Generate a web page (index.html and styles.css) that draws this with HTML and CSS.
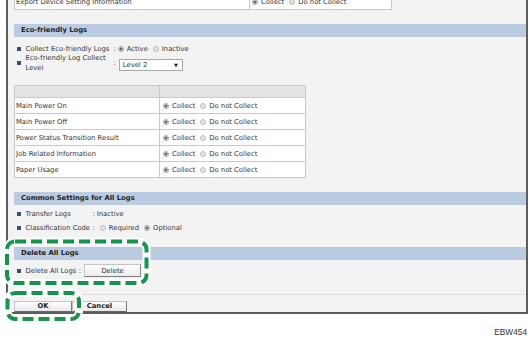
FILE: index.html
```html
<!DOCTYPE html>
<html>
<head>
<meta charset="utf-8">
<link rel="stylesheet" href="styles.css">
</head>
<body>
<div class="frame">
  <div class="ttbl">
    <div class="cell c1">Export Device Setting Information</div>
    <div class="cell c2"><span class="opts"><span class="rd on"></span><span class="ol">Collect</span><span class="rd"></span><span class="ol">Do not Collect</span></span></div>
  </div>

  <section class="sec eco">
    <div class="hdr">Eco-friendly Logs</div>
    <div class="rows">
      <div class="row r1"><span class="bul"></span><span class="lbl">Collect Eco-friendly Logs</span><span class="colon">:</span><span class="opts"><span class="rd on"></span><span class="ol">Active</span><span class="rd"></span><span class="ol">Inactive</span></span></div>
      <div class="row r2"><span class="bul"></span><span class="lbl">Eco-friendly Log Collect Level</span><span class="colon">:</span><span class="sel"><span>Level 2</span><span class="arr">&#9660;</span></span></div>
    </div>
    <div class="ltbl">
      <div class="cell hd"></div><div class="cell hd"></div>
      <div class="cell c1">Main Power On</div><div class="cell c2"><span class="opts"><span class="rd on"></span><span class="ol">Collect</span><span class="rd"></span><span class="ol">Do not Collect</span></span></div>
      <div class="cell c1">Main Power Off</div><div class="cell c2"><span class="opts"><span class="rd on"></span><span class="ol">Collect</span><span class="rd"></span><span class="ol">Do not Collect</span></span></div>
      <div class="cell c1">Power Status Transition Result</div><div class="cell c2"><span class="opts"><span class="rd on"></span><span class="ol">Collect</span><span class="rd"></span><span class="ol">Do not Collect</span></span></div>
      <div class="cell c1">Job Related Information</div><div class="cell c2"><span class="opts"><span class="rd on"></span><span class="ol">Collect</span><span class="rd"></span><span class="ol">Do not Collect</span></span></div>
      <div class="cell c1">Paper Usage</div><div class="cell c2"><span class="opts"><span class="rd on"></span><span class="ol">Collect</span><span class="rd"></span><span class="ol">Do not Collect</span></span></div>
    </div>
  </section>

  <section class="sec common">
    <div class="hdr">Common Settings for All Logs</div>
    <div class="rows">
      <div class="row"><span class="bul"></span><span class="lbl">Transfer Logs</span><span class="colon">:</span><span class="txt">Inactive</span></div>
      <div class="row"><span class="bul"></span><span class="lbl">Classification Code</span><span class="colon">:</span><span class="opts pad"><span class="rd"></span><span class="ol">Required</span><span class="rd on"></span><span class="ol">Optional</span></span></div>
    </div>
  </section>

  <section class="sec del">
    <div class="hdr">Delete All Logs</div>
    <div class="rows">
      <div class="row"><span class="bul"></span><span class="lbl">Delete All Logs</span><span class="colon">:</span><button class="dbtn">Delete</button></div>
    </div>
  </section>

  <div class="btnbar">
    <button class="btn ok">OK</button><button class="btn cancel">Cancel</button>
  </div>
</div>
<div class="code">EBW454</div>

<svg class="marks" width="530" height="338" viewBox="0 0 530 338">
  <rect x="7" y="241.5" width="139.5" height="41.5" rx="8" class="halo"/>
  <rect x="7.5" y="293" width="71.5" height="26" rx="8" class="halo"/>
  <rect x="7" y="241.5" width="139.5" height="41.5" rx="8" class="dash"/>
  <rect x="7.5" y="293" width="71.5" height="26" rx="8" class="dash"/>
</svg>
</body>
</html>
```
FILE: styles.css
```css
* { box-sizing: border-box; margin: 0; padding: 0; }
body {
  width: 530px; height: 338px; overflow: hidden; position: relative;
  background: #fff;
  font-family: "DejaVu Sans", Verdana, sans-serif;
  font-size: 6.8px; color: #333;
}
.frame {
  margin: -6px 0 0 6px;
  width: 522px;
  background: #f3f3f3;
  border: 2px solid #5d5d5d;
  border-top: 0;
  padding-left: 6px;
}
.cell {
  display: flex; align-items: center;
  border-right: 1px solid #c9c9c9;
  border-bottom: 1px solid #c9c9c9;
  background: #fff;
  white-space: nowrap;
}
.c1 { padding-left: 1px; }
.c2 { padding-left: 3px; }
.ttbl {
  display: grid; grid-template-columns: 235px 142px;
  width: 378px; border-left: 1px solid #c9c9c9;
}
.ttbl .cell { height: 16px; }
.ttbl .c2 { padding-left: 2px; }

.hdr {
  height: 13px; line-height: 13px;
  background: #bacbe2;
  font-weight: bold; color: #222;
  padding-left: 7px;
  margin-top: 14px;
}
.rows { padding-left: 3px; display: flex; flex-direction: column; }
.row { display: flex; align-items: center; white-space: nowrap; }
.bul { width: 4px; height: 4px; background: #35507c; margin-right: 4.5px; flex: none; }
.lbl { flex: none; }
.colon { flex: none; margin-right: 2px; }

.eco .rows { padding-top: 8px; }
.eco .lbl { width: 88px; white-space: normal; line-height: 10px; }
.eco .r1 { height: 8px; }
.eco .r1 .lbl { line-height: 8px; }
.sel {
  align-self: flex-end; margin: 0 0 2px 1px;
  width: 64px; height: 12px;
  background: #fff; border: 1px solid #a9a9a9;
  display: flex; align-items: center; justify-content: space-between;
  padding: 0 4px 0 3px;
}
.arr { font-size: 5px; color: #222; }

.opts { display: flex; align-items: center; }
.opts.pad { padding-left: 3px; }
.rd {
  width: 6px; height: 6px; border-radius: 50%; flex: none;
  border: 1px solid #bdbdbd; background: #e3e3e3;
  margin-right: 3px;
}
.rd.on {
  border-color: #a8a8a8;
  background: radial-gradient(circle, #666 0 1.2px, #e8e8e8 1.8px);
}
.ol { margin-right: 5px; }

.ltbl {
  display: grid; grid-template-columns: 145px 146px;
  width: 292px; margin-top: 12px;
  border-left: 1px solid #c9c9c9; border-top: 1px solid #c9c9c9;
}
.ltbl .cell { height: 16px; }
.ltbl .cell.hd { height: 12px; background: #e3e3e3; }
.ltbl .c2 { padding-left: 3px; }

.common .rows { padding-top: 3px; gap: 2px; }
.common .row { height: 12px; }
.common .lbl { width: 67px; }

.del .hdr { margin-top: 13px; }
.del .rows { padding-top: 4px; }
.del .colon { margin-left: 2.5px; margin-right: 3px; }
.dbtn {
  width: 57px; height: 13px;
  font: 6.8px "DejaVu Sans", Verdana, sans-serif; color: #333;
  border: 1px solid; border-color: #c4c4c4 #8a8a8a #7a7a7a #c4c4c4;
  background: linear-gradient(#ffffff, #ececec);
}

.btnbar {
  margin-top: 17px;
  border-top: 1px solid #dcdcdc;
  padding-top: 6px;
  display: flex;
}
.btn {
  height: 11px;
  font: bold 6.8px "DejaVu Sans", Verdana, sans-serif; color: #222;
  border: 1px solid; border-color: #c4c4c4 #7a7a7a #666 #c4c4c4;
  background: linear-gradient(#ffffff, #e8e8e8);
  line-height: 9px;
}
.ok { width: 58px; }
.cancel { width: 55px; }

.code {
  margin-top: 13px; line-height: 10px;
  text-align: right; padding-right: 3px;
  font: 8.3px "Liberation Sans", Arial, sans-serif; color: #333;
}

.marks { position: absolute; left: 0; top: 0; pointer-events: none; }
.halo { fill: none; stroke: #fff; stroke-width: 8; }
.dash { fill: none; stroke: #13964a; stroke-width: 4; stroke-dasharray: 11 5; }
```
